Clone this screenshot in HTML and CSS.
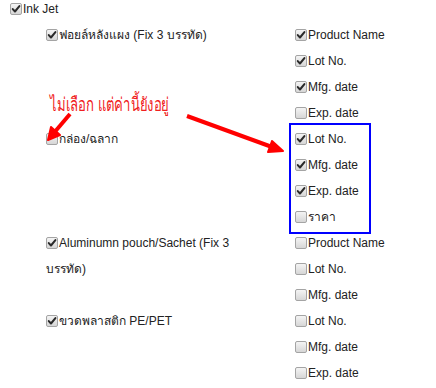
FILE: index.html
```html
<!DOCTYPE html>
<html lang="th">
<head>
  <meta charset="UTF-8" />
  <title>Ink Jet options</title>
  <link rel="stylesheet" href="styles.css">
</head>
<body>
  <div class="page">
    <label class="opt top"><span class="cb on"><svg viewBox="0 0 13 13"><path d="M3 6.6 L5.4 9.2 L10.2 3.4"/></svg></span>Ink Jet</label>

    <div class="groups">
      <!-- Foil blister -->
      <div class="group">
        <div class="pack">
          <label class="opt"><span class="cb on"><svg viewBox="0 0 13 13"><path d="M3 6.6 L5.4 9.2 L10.2 3.4"/></svg></span>ฟอยล์หลังแผง (Fix 3 บรรทัด)</label>
        </div>
        <ul class="fields">
          <li><label class="opt"><span class="cb on"><svg viewBox="0 0 13 13"><path d="M3 6.6 L5.4 9.2 L10.2 3.4"/></svg></span>Product Name</label></li>
          <li><label class="opt"><span class="cb on"><svg viewBox="0 0 13 13"><path d="M3 6.6 L5.4 9.2 L10.2 3.4"/></svg></span>Lot No.</label></li>
          <li><label class="opt"><span class="cb on"><svg viewBox="0 0 13 13"><path d="M3 6.6 L5.4 9.2 L10.2 3.4"/></svg></span>Mfg. date</label></li>
          <li><label class="opt"><span class="cb"></span>Exp. date</label></li>
        </ul>
      </div>

      <!-- Box / label -->
      <div class="group">
        <div class="pack">
          <label class="opt"><span class="cb"></span>กล่อง/ฉลาก</label>
        </div>
        <ul class="fields">
          <li><label class="opt"><span class="cb on"><svg viewBox="0 0 13 13"><path d="M3 6.6 L5.4 9.2 L10.2 3.4"/></svg></span>Lot No.</label></li>
          <li><label class="opt"><span class="cb on"><svg viewBox="0 0 13 13"><path d="M3 6.6 L5.4 9.2 L10.2 3.4"/></svg></span>Mfg. date</label></li>
          <li><label class="opt"><span class="cb on"><svg viewBox="0 0 13 13"><path d="M3 6.6 L5.4 9.2 L10.2 3.4"/></svg></span>Exp. date</label></li>
          <li><label class="opt"><span class="cb"></span>ราคา</label></li>
        </ul>
      </div>

      <!-- Pouch -->
      <div class="group">
        <div class="pack">
          <label class="opt"><span class="cb on"><svg viewBox="0 0 13 13"><path d="M3 6.6 L5.4 9.2 L10.2 3.4"/></svg></span>Aluminumn pouch/Sachet (Fix 3 บรรทัด)</label>
        </div>
        <ul class="fields">
          <li><label class="opt"><span class="cb"></span>Product Name</label></li>
          <li><label class="opt"><span class="cb"></span>Lot No.</label></li>
          <li><label class="opt"><span class="cb"></span>Mfg. date</label></li>
        </ul>
      </div>

      <!-- Plastic bottle -->
      <div class="group">
        <div class="pack">
          <label class="opt"><span class="cb on"><svg viewBox="0 0 13 13"><path d="M3 6.6 L5.4 9.2 L10.2 3.4"/></svg></span>ขวดพลาสติก PE/PET</label>
        </div>
        <ul class="fields">
          <li><label class="opt"><span class="cb"></span>Lot No.</label></li>
          <li><label class="opt"><span class="cb"></span>Mfg. date</label></li>
          <li><label class="opt"><span class="cb"></span>Exp. date</label></li>
        </ul>
      </div>
    </div>

    <!-- Annotation layer -->
    <p class="note">ไม่เลือก แต่ค่านี้ยังอยู่</p>
    <div class="mark"></div>
    <svg class="arrows" viewBox="0 0 436 388">
      <line x1="70" y1="114" x2="53" y2="134"/>
      <polygon points="48,140 51,127 60,135"/>
      <line x1="187" y1="116" x2="272" y2="147"/>
      <polygon points="283,151 272,141 268,152"/>
    </svg>
  </div>
</body>
</html>
```

FILE: styles.css
```css
* { margin: 0; padding: 0; box-sizing: border-box; }
html, body {
  background-color: #fff;
  color: #222;
  font-family: 'Liberation Sans', Arial, sans-serif;
  font-size: 12px;
}

.page {
  position: relative;
  width: 436px;
  height: 388px;
  padding-left: 10px;
  overflow: hidden;
}

.opt {
  display: block;
  line-height: 26px;
}

.opt.top {
  line-height: 18px;
}

/* Fake checkbox in the old grey style */
.cb {
  display: inline-block;
  width: 12px;
  height: 12px;
  margin-right: 1px;
  vertical-align: -2px;
  border: 1px solid #a4a4a4;
  border-radius: 2px;
  background: linear-gradient(#f4f4f4, #d6d6d6);
  position: relative;
}

.cb svg {
  position: absolute;
  top: -1px;
  left: -1px;
  width: 12px;
  height: 12px;
}

.cb path {
  fill: none;
  stroke: #2a2a2a;
  stroke-width: 2.2;
  stroke-linecap: round;
  stroke-linejoin: round;
}

.groups {
  margin-top: 4px;
  margin-left: 36px;
}

.group {
  display: grid;
  grid-template-columns: 249px 1fr;
}

.pack {
  padding-right: 40px;
}

.fields {
  list-style: none;
}

/* Annotations */
.note {
  position: absolute;
  left: 50px;
  top: 91px;
  color: #f02020;
  font-size: 19px;
  line-height: 28px;
  white-space: nowrap;
  transform: scaleX(0.69);
  transform-origin: left center;
}

.mark {
  position: absolute;
  left: 289px;
  top: 123px;
  width: 82px;
  height: 111px;
  border: 2px solid #0000ff;
}

.arrows {
  position: absolute;
  top: 0;
  left: 0;
  width: 436px;
  height: 388px;
  pointer-events: none;
}

.arrows line {
  stroke: #ff0000;
  stroke-width: 4;
}

.arrows polygon {
  fill: #ff0000;
  stroke: #ff0000;
  stroke-width: 2;
  stroke-linejoin: round;
}
```
